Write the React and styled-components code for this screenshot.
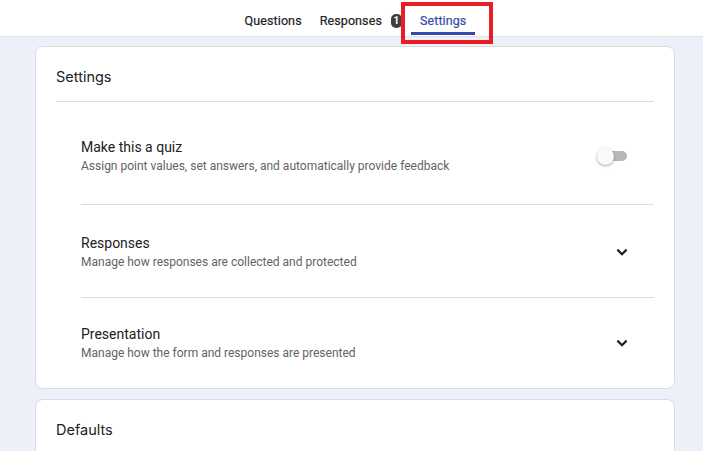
import React from "react";
import styled, { createGlobalStyle } from "styled-components";

const GlobalStyle = createGlobalStyle`
  html, body {
    margin: 0;
    padding: 0;
    height: 100%;
    overflow: hidden;
    background: #eef0f9;
    font-family: Roboto, "Liberation Sans", sans-serif;
    color: #202124;
  }
`;

const Page = styled.div`
  min-height: 100vh;
  background: #eef0f9;
`;

const TopBar = styled.div`
  height: 36px;
  background: #fff;
  border-bottom: 1px solid #dfe1e5;
  display: flex;
  justify-content: center;
  padding-left: 8px;
`;

const TabList = styled.div`
  display: flex;
  align-items: stretch;
  height: 100%;
`;

const Tab = styled.div`
  position: relative;
  display: flex;
  align-items: center;
  gap: 9px;
  padding: 5px 9px 0;
  font-size: 12.5px;
  font-weight: 400;
  letter-spacing: 0.1px;
  color: ${(p) => (p.$active ? "#3949ab" : "#202124")};
  -webkit-text-stroke: 0.2px currentColor;

  &::after {
    content: "";
    display: ${(p) => (p.$active ? "block" : "none")};
    position: absolute;
    left: 0;
    right: 0;
    bottom: 1px;
    height: 3px;
    background: #3949ab;
  }
`;

const Badge = styled.span`
  display: inline-flex;
  align-items: center;
  justify-content: center;
  width: 11px;
  height: 14px;
  border-radius: 5px;
  background: #3c4043;
  color: #fff;
  font-size: 10px;
  font-weight: 700;
  -webkit-text-stroke: 0;
`;

/* red box drawn around the current tab */
const Highlight = styled.div`
  position: absolute;
  left: -10px;
  right: -18px;
  top: 2px;
  bottom: -8px;
  border: 4px solid #e81d25;
  pointer-events: none;
`;

const Main = styled.div`
  padding: 9px 28px 0 35px;
  display: flex;
  flex-direction: column;
  gap: 10px;
`;

const Card = styled.section`
  background: #fff;
  border: 1px solid #dadce0;
  border-radius: 8px;
  padding: 0 20px;
  min-height: ${(p) => p.$minHeight || "auto"};
`;

const CardTitle = styled.h2`
  margin: 0;
  padding-top: 20px;
  height: 34px;
  font-family: Inter, Roboto, sans-serif;
  font-size: 14.5px;
  line-height: 20px;
  font-weight: 400;
  color: #202124;
  border-bottom: ${(p) => (p.$divider ? "1px solid #dadce0" : "none")};
`;

const rowPadding = (p) => {
  if (p.$first) return "35px 0 29px";
  if (p.$last) return "26px 0 26px";
  return "28px 0 26px";
};

const Row = styled.div`
  margin-left: 25px;
  display: flex;
  align-items: center;
  justify-content: space-between;
  padding: ${rowPadding};
  border-bottom: ${(p) => (p.$last ? "none" : "1px solid #dadce0")};
`;

const RowText = styled.div`
  display: flex;
  flex-direction: column;
`;

const RowTitle = styled.div`
  font-size: 14px;
  line-height: 20px;
  color: #202124;
`;

const RowSub = styled.div`
  font-size: 12px;
  line-height: 18px;
  color: #5f6368;
`;

const Switch = styled.div`
  position: relative;
  width: 30px;
  height: 18px;
  margin-right: 27px;
  display: flex;
  align-items: center;

  &::before {
    content: "";
    position: absolute;
    left: 8px;
    right: 0;
    height: 10px;
    border-radius: 5px;
    background: #b9b9b9;
  }
  &::after {
    content: "";
    position: absolute;
    left: 0;
    width: 17px;
    height: 17px;
    border-radius: 50%;
    background: #fafafa;
    box-shadow: 0 1px 3px rgba(0, 0, 0, 0.35);
  }
`;

const Chevron = styled.svg`
  width: 24px;
  height: 24px;
  margin-right: 20px;
`;

const ExpandIcon = () => (
  <Chevron viewBox="0 0 24 24">
    <path d="M7.4 9.6 12 14.2l4.6-4.6" fill="none" stroke="#202124" strokeWidth="2.2" />
  </Chevron>
);

const sections = [
  {
    title: "Responses",
    sub: "Manage how responses are collected and protected",
  },
  {
    title: "Presentation",
    sub: "Manage how the form and responses are presented",
  },
];

export default function App() {
  return (
    <Page>
      <GlobalStyle />
      <TopBar>
        <TabList>
          <Tab>Questions</Tab>
          <Tab>
            Responses <Badge>1</Badge>
          </Tab>
          <Tab $active>
            Settings
            <Highlight />
          </Tab>
        </TabList>
      </TopBar>
      <Main>
        <Card>
          <CardTitle $divider>Settings</CardTitle>
          <Row $first>
            <RowText>
              <RowTitle>Make this a quiz</RowTitle>
              <RowSub>Assign point values, set answers, and automatically provide feedback</RowSub>
            </RowText>
            <Switch />
          </Row>
          {sections.map((s, i) => (
            <Row key={s.title} $last={i === sections.length - 1}>
              <RowText>
                <RowTitle>{s.title}</RowTitle>
                <RowSub>{s.sub}</RowSub>
              </RowText>
              <ExpandIcon />
            </Row>
          ))}
        </Card>
        <Card $minHeight="200px">
          <CardTitle>Defaults</CardTitle>
        </Card>
      </Main>
    </Page>
  );
}
